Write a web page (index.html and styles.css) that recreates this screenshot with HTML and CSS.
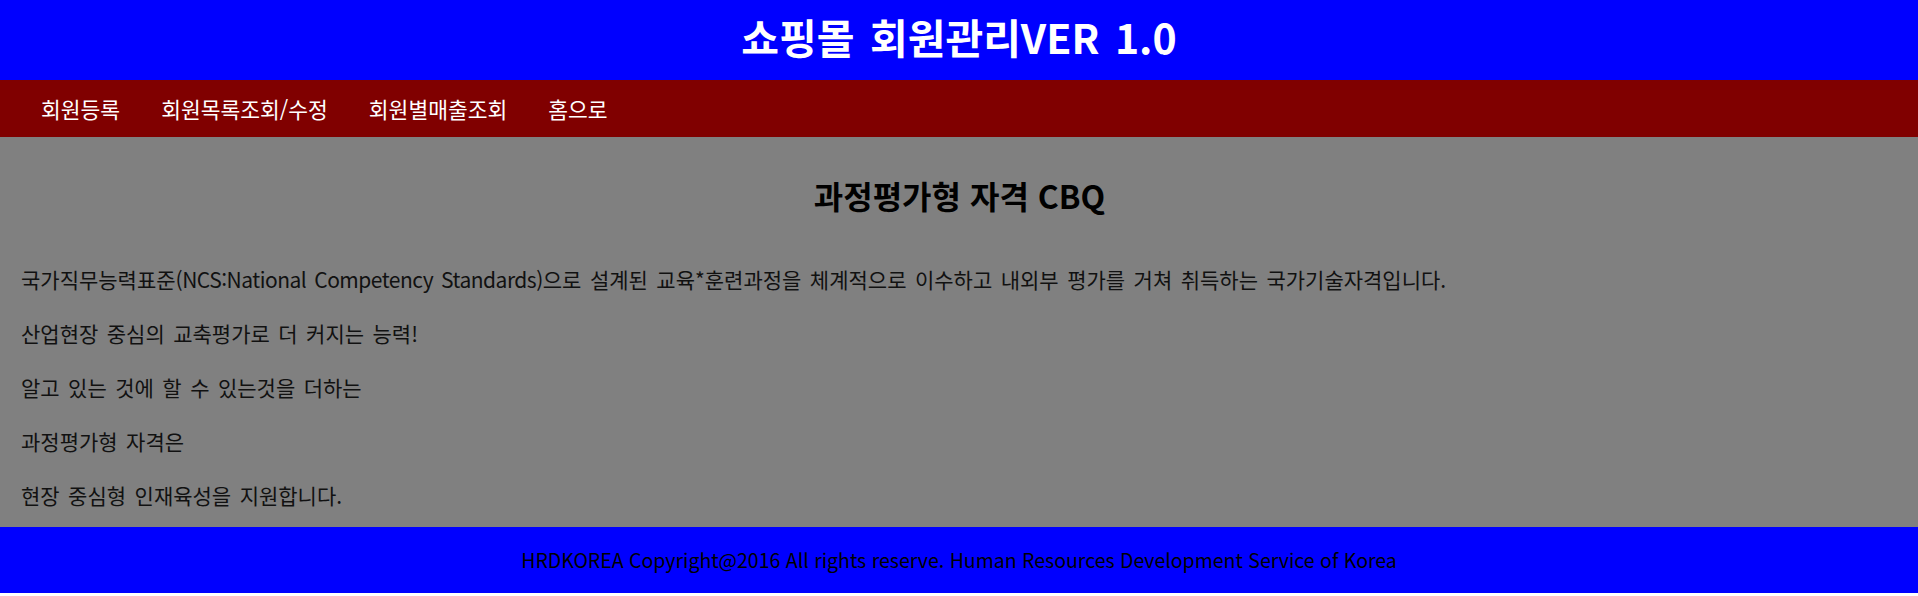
FILE: index.html
```html
<!DOCTYPE html>
<html lang="ko">
<head>
<meta charset="utf-8">
<title>쇼핑몰 회원관리</title>
<link rel="stylesheet" href="styles.css">
</head>
<body>
<header class="site-header">
  <h1 class="site-title">쇼핑몰 회원관리VER 1.0</h1>
</header>
<nav class="site-nav">
  <a class="nav-link" href="#">회원등록</a>
  <a class="nav-link" href="#">회원목록조회/수정</a>
  <a class="nav-link" href="#">회원별매출조회</a>
  <a class="nav-link" href="#">홈으로</a>
</nav>
<main class="content">
  <h2 class="content-title">과정평가형 자격 CBQ</h2>
  <p class="content-text">국가직무능력표준<span class="latin">(NCS:National Competency Standards)</span>으로 설계된 교육*훈련과정을 체계적으로 이수하고 내외부 평가를 거쳐 취득하는 국가기술자격입니다.</p>
  <p class="content-text">산업현장 중심의 교축평가로 더 커지는 능력!</p>
  <p class="content-text">알고 있는 것에 할 수 있는것을 더하는</p>
  <p class="content-text">과정평가형 자격은</p>
  <p class="content-text">현장 중심형 인재육성을 지원합니다.</p>
</main>
<footer class="site-footer">
  <p class="footer-text">HRDKOREA Copyright@2016 All rights reserve. Human Resources Development Service of Korea</p>
</footer>
</body>
</html>
```

FILE: styles.css
```css
html, body {
  margin: 0;
  padding: 0;
  background: #ffffff;
}

body {
  font-family: "Noto Sans CJK KR", "Noto Sans", sans-serif;
  color: #000000;
}

.site-header {
  background: #0000ff;
  height: 80px;
  box-sizing: border-box;
  padding-bottom: 9px;
  display: flex;
  align-items: center;
  justify-content: center;
}

.site-title {
  margin: 0;
  color: #ffffff;
  font-size: 41px;
  font-weight: 700;
  line-height: 48px;
  word-spacing: 4px;
}

.site-nav {
  background: #800000;
  height: 57px;
  display: flex;
  align-items: center;
  gap: 41px;
  padding-left: 41px;
}

.nav-link {
  color: #ffffff;
  text-decoration: none;
  font-size: 21.5px;
  line-height: 28px;
}

.content {
  background: #808080;
  display: flex;
  flex-direction: column;
  gap: 26px;
  padding: 38px 20px 18px 21px;
}

.content-title {
  margin: 0 0 24px 0;
  text-align: center;
  font-size: 32px;
  font-weight: 700;
  line-height: 40px;
}

.content-text {
  margin: 0;
  font-size: 21px;
  line-height: 28px;
  word-spacing: 2.6px;
  color: #111111;
}

.latin {
  letter-spacing: -0.5px;
}

.site-footer {
  background: #0000ff;
  height: 66px;
  display: flex;
  align-items: center;
  justify-content: center;
}

.footer-text {
  margin: 0;
  font-size: 19.5px;
  line-height: 26px;
  color: #000000;
}
```
